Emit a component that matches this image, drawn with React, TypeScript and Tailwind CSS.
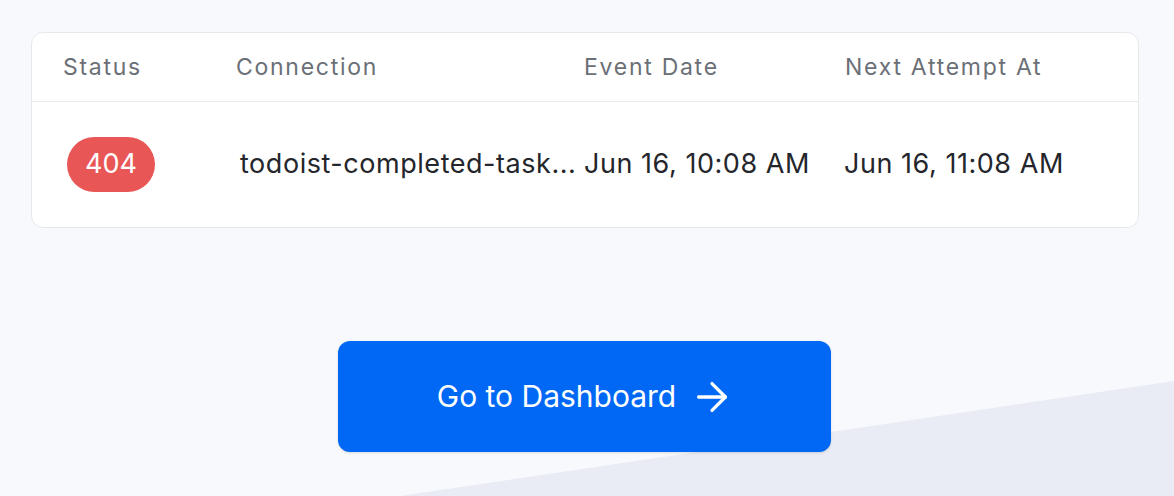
import { ArrowRight } from 'lucide-react';

const rows = [
  {
    status: '404',
    connection: 'todoist-completed-task...',
    eventDate: 'Jun 16, 10:08 AM',
    nextAttempt: 'Jun 16, 11:08 AM',
  },
];

const cols = 'grid grid-cols-[173px_348px_261px_1fr] px-[31px]';

export default function App() {
  return (
    <div
      className="relative w-[1174px] h-[496px] overflow-hidden bg-[#f7f9fc]"
      style={{ fontFamily: 'Inter, "Noto Sans", sans-serif' }}
    >
      {/* background wedge */}
      <svg className="absolute inset-0" width="1174" height="496" viewBox="0 0 1174 496">
        <polygon points="1174,381 400,496 1174,496" fill="#e9ecf4" />
      </svg>

      <div className="relative flex flex-col">
        <div className="ml-[31px] mt-[32px] w-[1108px] rounded-xl border border-[#e6e8ec] bg-white">
          <div className={`${cols} h-[69px] items-center border-b border-[#e8eaee] text-[23px] tracking-[0.075em] text-[#6b6f76]`}>
            <span>Status</span>
            <span>Connection</span>
            <span>Event Date</span>
            <span>Next Attempt At</span>
          </div>
          {rows.map((r) => (
            <div key={r.connection} className={`${cols} h-[125px] items-center text-[27px] tracking-[0.02em] text-[#24262b]`}>
              <div>
                <span className="ml-[4px] inline-flex h-[55px] w-[88px] items-center justify-center rounded-full bg-[#e85656] text-[27px] tracking-normal text-white">
                  {r.status}
                </span>
              </div>
              <span className="ml-[4px] whitespace-nowrap">{r.connection}</span>
              <span className="whitespace-nowrap">{r.eventDate}</span>
              <span className="-ml-[1px] whitespace-nowrap">{r.nextAttempt}</span>
            </div>
          ))}
        </div>

        <div className="mt-[113px] flex justify-center pr-[2px]">
          <button className="ml-[-4px] flex h-[111px] w-[493px] items-center justify-center gap-[13px] rounded-xl bg-[#0068f5] text-[30px] text-white shadow-sm">
            <span className="ml-[4px]">Go to Dashboard</span>
            <ArrowRight size={46} strokeWidth={1.7} />
          </button>
        </div>
      </div>
    </div>
  );
}
